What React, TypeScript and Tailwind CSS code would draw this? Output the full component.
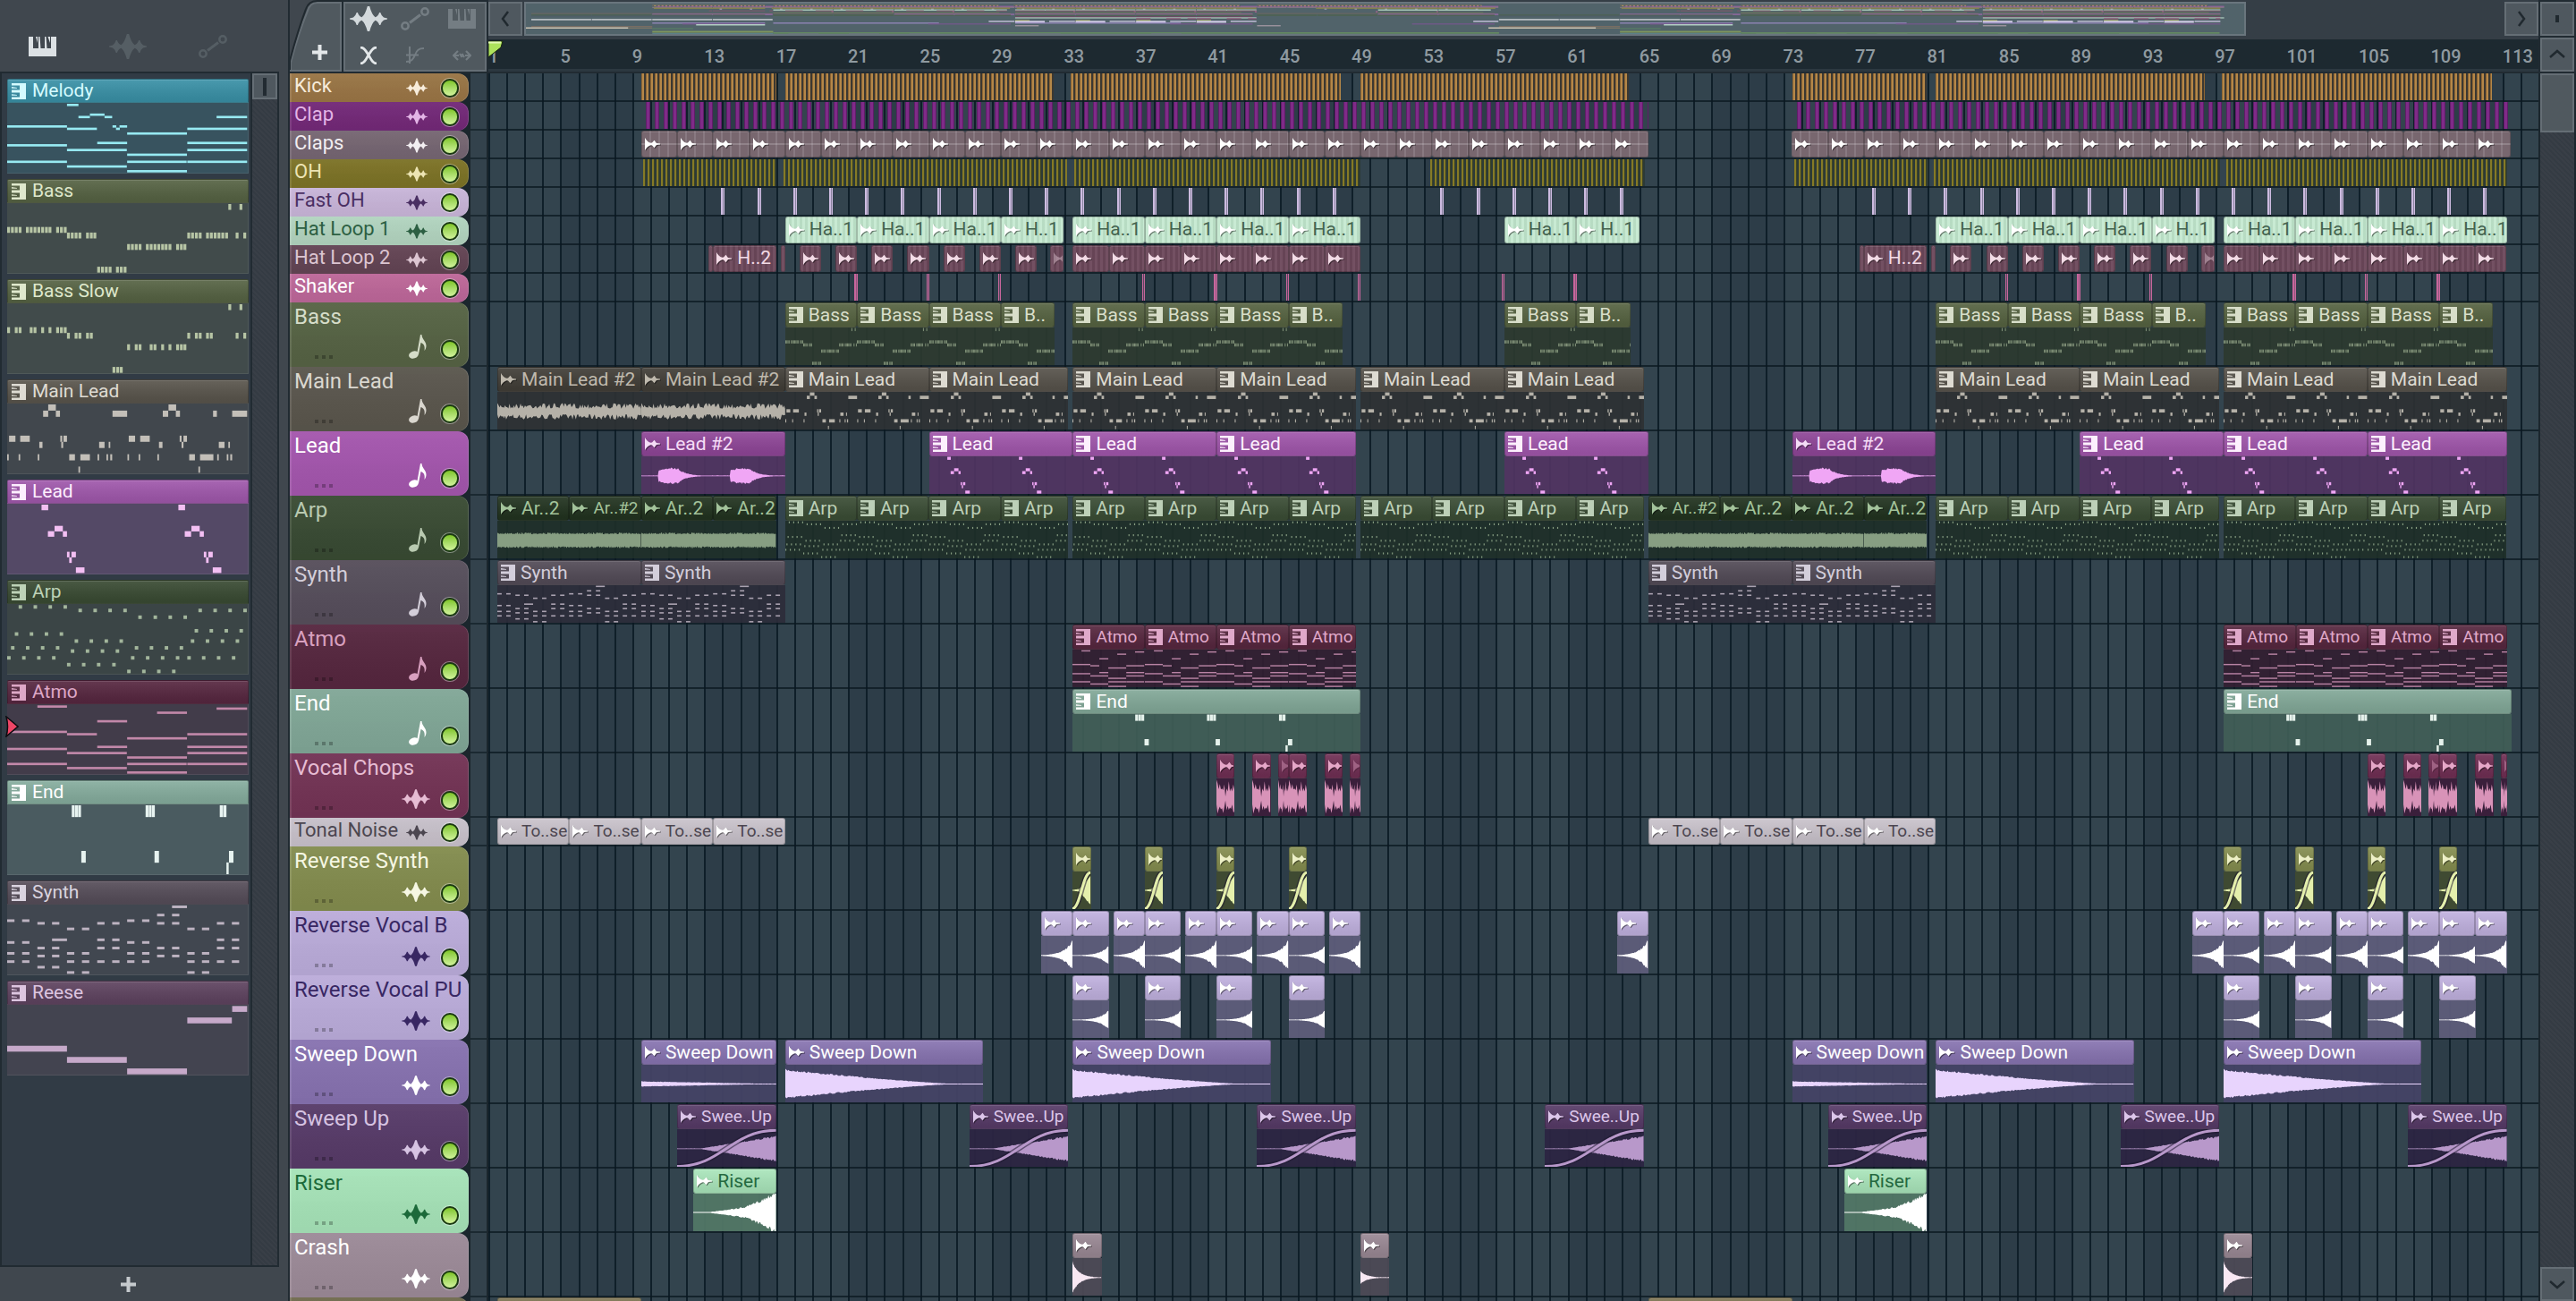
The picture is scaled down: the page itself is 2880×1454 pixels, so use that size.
import React from "react";

/* ---------- note patterns, drawn on a 756 x 237 canvas ---------- */

type Note = [number, number, number, number];
const row = (y: number, w: number, h: number, xs: number[]): Note[] => xs.map((x) => [x, y, w, h]);
const bars = (h: number, list: [number, number, number][]): Note[] => list.map(([x, y, w]) => [x, y, w, h]);

const PATTERNS: Record<string, Note[]> = {
  melody: bars(8, [
    [0, 76, 188], [0, 140, 188], [0, 196, 188], [188, 3, 36], [224, 44, 36], [260, 36, 46], [306, 44, 24],
    [188, 84, 94], [331, 76, 12], [342, 84, 12], [353, 76, 24], [283, 132, 94], [188, 156, 188], [188, 212, 188],
    [377, 100, 188], [377, 172, 188], [377, 196, 187], [377, 228, 188], [658, 44, 96], [566, 84, 188],
    [566, 132, 188], [566, 156, 188], [566, 196, 188],
  ]),
  bass: [
    ...row(81, 9, 20, [0, 12, 24, 36, 59, 71, 83, 95, 107, 119, 130, 154, 166, 178]),
    ...row(100, 9, 20, [188, 200, 212, 224, 248, 260, 271, 566, 578, 590, 602, 625, 637, 649, 661, 673, 685, 718, 742]),
    ...row(139, 9, 20, [377, 389, 401, 413, 436, 448, 460, 472, 484, 495, 507, 531, 543, 554]),
    ...row(216, 9, 20, [283, 295, 307, 319, 342, 354, 366]),
    ...row(3, 9, 20, [695, 730]),
  ],
  bassSlow: [
    ...row(81, 9, 20, [0, 24, 36, 71, 83, 107, 130, 154, 166, 178]),
    ...row(100, 9, 20, [188, 212, 224, 248, 260, 566, 590, 602, 625, 637, 718, 742]),
    ...row(139, 9, 20, [377, 401, 413, 448, 460, 484, 507, 531, 543, 554]),
    ...row(216, 9, 20, [331, 343, 354]),
    ...row(3, 9, 20, [695, 730]),
  ],
  mainLead: bars(21, [
    [129, 3, 24], [507, 3, 24], [113, 24, 16], [153, 24, 13], [331, 24, 46], [489, 24, 17], [530, 24, 13],
    [647, 24, 12], [707, 24, 47], [6, 109, 20], [41, 109, 30], [167, 109, 6], [177, 109, 11], [382, 109, 20],
    [418, 109, 30], [542, 109, 6], [554, 109, 11], [101, 130, 10], [170, 130, 6], [289, 130, 17], [319, 130, 5],
    [477, 130, 11], [548, 130, 6], [665, 130, 18], [695, 130, 5], [0, 172, 5], [36, 172, 5], [96, 172, 5],
    [195, 172, 18], [230, 172, 30], [284, 172, 5], [312, 172, 5], [324, 172, 6], [378, 172, 5], [413, 172, 5],
    [472, 172, 5], [572, 172, 18], [606, 172, 42], [660, 172, 5], [690, 172, 5], [701, 172, 6], [224, 214, 5], [601, 214, 5],
  ]),
  lead: [0, 430].flatMap((o) =>
    bars(19, [
      [108 + o, 3, 21], [128 + o, 93, 20], [149 + o, 75, 26], [175 + o, 93, 13], [188 + o, 163, 8],
      [202 + o, 163, 14], [195 + o, 182, 8], [216 + o, 216, 27],
    ]),
  ),
  arp: [
    ...row(4, 11, 12, [36, 83, 130, 177]),
    ...row(16, 11, 12, [224, 271, 318, 365, 601, 648, 695, 742]),
    ...row(39, 11, 12, [412, 460, 507, 554]),
    ...row(85, 11, 12, [589, 636, 683, 730]),
    ...row(96, 11, 12, [24, 71, 118, 165]),
    ...row(120, 11, 12, [212, 259, 306, 353, 577, 624, 671, 718]),
    ...row(143, 11, 12, [12, 59, 106, 153, 401, 448, 495, 542]),
    ...row(154, 11, 12, [200, 247, 294, 341]),
    ...row(177, 11, 12, [0, 47, 94, 141, 389, 436, 483, 530, 566, 612, 659, 706]),
    ...row(200, 11, 12, [188, 235, 282, 330]),
    ...row(223, 11, 12, [377, 424, 471, 518]),
  ],
  atmo: bars(8, [
    [95, 4, 93], [0, 90, 188], [0, 148, 188], [0, 199, 188], [188, 98, 94], [283, 54, 94], [283, 141, 94],
    [188, 162, 188], [188, 213, 188], [377, 112, 188], [377, 177, 188], [377, 199, 187], [377, 228, 188],
    [471, 25, 94], [658, 11, 96], [566, 98, 188], [566, 141, 188], [566, 162, 188], [566, 199, 188],
  ]),
  end: [
    ...[203, 435].flatMap((x) => row(3, 9, 40, [x, x + 10, x + 20])),
    ...row(3, 10, 40, [668, 679]),
    ...row(158, 14, 40, [233, 463, 697]),
    [689, 197, 7, 40],
  ],
  synth: [
    [518, 3, 47, 9],
    [141, 115, 47, 9],
    ...row(31, 23, 9, [471, 518]),
    ...row(50, 23, 9, [0, 47, 377, 424]),
    ...row(59, 23, 9, [95, 141, 283, 330, 471, 518, 659, 706]),
    ...row(78, 23, 9, [188, 235, 566, 612]),
    ...row(115, 23, 9, [283, 330, 659, 706]),
    ...row(124, 23, 9, [0, 47, 377, 424]),
    ...row(143, 23, 9, [95, 141, 283, 330, 471, 518, 659, 706]),
    ...row(161, 23, 9, [0, 47, 188, 235, 377, 424, 566, 612]),
    ...row(170, 23, 9, [95, 141, 471, 518]),
    ...row(189, 23, 9, [0, 47, 188, 235, 283, 330, 377, 424, 566, 612, 659, 706]),
    ...row(208, 23, 9, [95, 141]),
    ...row(226, 23, 9, [188, 235, 566, 612]),
  ],
  reese: bars(20, [[0, 139, 188], [188, 177, 188], [377, 216, 188], [566, 43, 140], [707, 4, 47]]),
};

const PATTERN_BARS: Record<string, number> = { bass: 4, mainLead: 8, lead: 7, arp: 4, atmo: 4, end: 13, synth: 8 };

function Notes({ name, part = 1 }: { name: string; part?: number }) {
  return (
    <svg className="block h-full w-full" viewBox={`0 0 ${756 * part} 237`} preserveAspectRatio="none" fill="currentColor" aria-hidden="true">
      {PATTERNS[name].map(([x, y, w, h], i) => (
        <rect key={i} x={x} y={y} width={w} height={h} />
      ))}
    </svg>
  );
}

/* ---------- audio wave shapes, drawn on a 200 x 100 canvas ---------- */

function wave(env: (t: number) => number, jitter: number, steps = 160, center = 52): string {
  let seed = 7;
  const rand = () => {
    seed = (seed * 16807) % 2147483647;
    return seed / 2147483647;
  };
  const top: string[] = [];
  const bottom: string[] = [];
  for (let i = 0; i <= steps; i++) {
    const t = i / steps;
    const x = (t * 200).toFixed(1);
    const a = Math.max(env(t) * 50, 1.2);
    top.push(`${x},${(center - a * (1 - jitter * rand())).toFixed(1)}`);
    bottom.unshift(`${x},${(center + a * (1 - jitter * rand())).toFixed(1)}`);
  }
  return [...top, ...bottom].join(" ");
}

const blob = (t: number) => {
  const u = (t % 0.5) - 0.12;
  if (u < 0) return 0;
  if (u < 0.04) return 0.32 + u * 2;
  if (u < 0.13) return 0.44;
  return 0.44 * Math.exp(-(u - 0.13) * 17);
};

const WAVES: Record<string, string> = {
  mainLead2: wave(() => 0.44, 0.68, 130),
  lead2: wave(blob, 0.22, 200),
  arp2: wave(() => 0.42, 0.25, 150),
  chop: wave((t) => (t > 0.44 && t < 0.52 ? 0.15 : 0.97), 0.7, 16),
  reverseA: wave((t) => 0.85 * Math.exp((t - 1) * 3.6), 0.2, 60),
  reverseB: wave((t) => 0.52 * Math.exp((t - 1) * 4.2), 0.15, 60),
  sweepDown: wave((t) => 0.8 * Math.pow(Math.max(0, 1 - t * 1.15), 1.25), 0.15, 180, 51),
  sweepThin: wave((t) => 0.15 * (1 - t), 0.2, 120, 51),
  sweepUp: wave((t) => Math.max(0, (t - 0.22) / 0.78) * 0.7, 0.15, 120),
  reverseSynth: wave((t) => (t < 0.4 ? 0.02 + t * 0.15 : 0.1 + (t - 0.4) * 1.15), 0.1, 30, 50),
  riser: wave((t) => (t < 0.15 ? 0 : 0.36 * ((t - 0.15) / 0.5) ** 1.1 * (t > 0.65 ? 1 + (t - 0.65) * 2.6 : 0.9)), 0.25, 90, 50),
  crash: wave((t) => 0.88 * Math.exp(-t * 4.2), 0.15, 60),
  crashSoft: wave((t) => 0.36 * Math.exp(-t * 4.2), 0.15, 60),
};

function Wave({ name, curve }: { name: string; curve?: boolean }) {
  return (
    <svg className="block h-full w-full" viewBox="0 0 200 100" preserveAspectRatio="none" aria-hidden="true">
      <polygon points={WAVES[name]} fill="currentColor" />
      {curve && (
        <g fill="none">
          <path d="M0 99C90 99 110 3 200 3" stroke="#1e1830" strokeOpacity="0.55" strokeWidth="6" vectorEffect="non-scaling-stroke" />
          <path d="M0 99C90 99 110 3 200 3" stroke="currentColor" strokeWidth="3" vectorEffect="non-scaling-stroke" />
        </g>
      )}
    </svg>
  );
}

/* ---------- icons ---------- */

function PatternIcon() {
  return (
    <svg className="h-[18px] w-4 shrink-0" viewBox="0 0 16 18" fill="currentColor" aria-hidden="true">
      <path d="M0 0H16V18H0V15.500H9V10.500H0V7.500H9V2.500H0Z" />
      <path d="M0 4L6 5V5.800H0ZM0 12.200L6 13V13.800H0Z" />
    </svg>
  );
}

function AudioIcon() {
  return (
    <svg className="h-[14px] w-[17px] shrink-0 drop-shadow-[1px_1px_0_rgba(0,0,0,0.45)]" viewBox="0 0 17 14" fill="currentColor" aria-hidden="true">
      <path d="M0 0C1.500 2.500 3.500 5 6.500 5.800L8 5.500L10.500 2.800L13 6L17 6.600V7.400L13 8L10.500 11.200L8 8.500L6.500 8.200C3.500 9 1.500 11.500 0 14Z" />
    </svg>
  );
}

function WaveGlyph({ className }: { className: string }) {
  return (
    <svg className={className} viewBox="0 0 42 28" fill="currentColor" aria-hidden="true">
      <path d="M0 13.600L4 12.600Q6.500 11 7.700 7H8.900Q10 11 13.500 12.300Q17.500 9 19.800 0H22.200Q24.500 9 28.500 12.300Q32 11 33.100 7H34.300Q35.500 11 38 12.600L42 13.600V14.400L38 15.400Q35.500 17 34.300 21H33.100Q32 17 28.500 15.700Q24.500 19 22.200 28H19.800Q17.500 19 13.500 15.700Q10 17 8.900 21H7.700Q6.500 17 4 15.400L0 14.400Z" />
    </svg>
  );
}

function AutomationGlyph() {
  return (
    <svg className="h-[26px] w-[32px]" viewBox="0 0 32 26" fill="none" stroke="currentColor" strokeWidth="2.500" aria-hidden="true">
      <circle cx="5" cy="21" r="3.700" />
      <circle cx="27" cy="5" r="3.700" />
      <path d="M10 17.500L22 8.500" strokeWidth="3" />
    </svg>
  );
}

function PianoGlyph() {
  return (
    <svg className="h-[22px] w-[31px]" viewBox="0 0 31 22" fill="currentColor" aria-hidden="true">
      <path d="M0 0H5V13H11V0H12.500L13.500 13H18V0H19.500L20.500 13H25V0H31V22H0Z" />
      <path d="M8 0H10V7ZM21.500 0H24V7Z" />
    </svg>
  );
}

function NoteGlyph() {
  return (
    <svg className="h-[27px] w-5" viewBox="0 0 20 27" fill="currentColor" aria-hidden="true">
      <ellipse cx="5.500" cy="22.500" rx="5.500" ry="4" transform="rotate(-18 5.500 22.500)" />
      <path d="M9 22L13 0H14.500C14.500 5 20 8 19.500 13C19.300 15 18.500 17 17.500 18C18.300 13 17 10 13.500 9L11 22Z" />
    </svg>
  );
}

function Chevron({ d }: { d: string }) {
  return (
    <svg className="size-5" viewBox="0 0 20 20" fill="none" stroke="#20292f" strokeWidth="2.500" aria-hidden="true">
      <path d={d} />
    </svg>
  );
}

function Plus() {
  return (
    <svg className="size-[17px]" viewBox="0 0 17 17" fill="currentColor" aria-hidden="true">
      <path d="M6.500 0H10.500V6.500H17V10.500H10.500V17H6.500V10.500H0V6.500H6.500Z" />
    </svg>
  );
}

/* ---------- arrangement data; positions are in bars ---------- */

type Clip = { s: number; e: number; label?: string; notes?: string; wave?: string; curve?: boolean; faded?: boolean; bare?: boolean; head?: string };
type Track = {
  name: string;
  tone: string;
  ink: string;
  small?: boolean;
  note?: boolean;
  mini: string;
  head?: string;
  face?: string;
  iconInk?: string;
  body?: string;
  art?: string;
  stripes?: string;
  clips: Clip[];
};

const chain = (edges: number[], extra: (i: number) => Partial<Clip>): Clip[] =>
  edges.slice(0, -1).map((s, i) => ({ s, e: edges[i + 1], ...extra(i) }));
const every = (from: number, to: number, step: number, length: number, extra: Partial<Clip> = {}): Clip[] => {
  const out: Clip[] = [];
  for (let s = from; s < to; s += step) out.push({ s, e: s + length, ...extra });
  return out;
};
const spans = (list: [number, number][], extra: Partial<Clip> = {}): Clip[] => list.map(([s, e]) => ({ s, e, ...extra }));

const BASS = (i: number) => ({ label: i === 3 ? "B.." : "Bass", notes: "bass" });
const ARP = () => ({ label: "Arp", notes: "arp" });
const MAIN = () => ({ label: "Main Lead", notes: "mainLead" });
const ATMO = () => ({ label: "Atmo", notes: "atmo" });
const HAT = (i: number) => ({ label: i === 3 ? "H..1" : "Ha..1" });
const TONAL = () => ({ label: "To..se" });
const ARP_AUDIO = "bg-[#22331f] text-[#a3c39b]";
const MAIN_AUDIO = "bg-[#413e37] text-[#bfb9ad]";
const SMALL_TEXT_LABELS = ["To..se", "Ar..#2", "Swee..Up", "Atmo"];

const chops = (o: number, last: number): Clip[] => [
  ...spans([[41 + o, 42 + o], [43 + o, 44 + o]], { wave: "chop" }),
  { s: 44.4 + o, e: 45 + o, wave: "chop", faded: true },
  ...spans([[45 + o, 46 + o], [47 + o, 48 + o]], { wave: "chop" }),
  { s: 48.4 + o, e: last, wave: "chop", faded: true },
];
const vocalB = (o: number): Clip[] =>
  [0, 4, 8, 12].flatMap((k) => [
    { s: 31.25 + o + k, e: 33 + o + k, wave: "reverseA" },
    { s: 33 + o + k, e: 35 + o + k, wave: "reverseB" },
  ]);
const hatTwo = (o: number): Clip[] => [
  { s: 12.75 + o, e: 13 + o, bare: true },
  { s: 13 + o, e: 16.5 + o, label: "H..2" },
  { s: 16.75 + o, e: 17 + o, bare: true },
  ...every(17.8 + o, 31 + o, 2, 1.2),
  { s: 31.75 + o, e: 32.5 + o, faded: true },
];

const TRACKS: Track[] = [
  {
    name: "Kick", tone: "bg-[#997545]", ink: "text-[#f7ecdb]", small: true, mini: "fill-[#c59a59]",
    stripes: "bg-[repeating-linear-gradient(90deg,#8c6534_0_1px,#b58748_1px_3px,#3b3832_3px_5px)]",
    clips: spans([[9, 16.5], [17, 31.95], [32.9, 47.9], [49, 63.9], [73, 80.5], [81, 95.95], [96.9, 111.9]]),
  },
  {
    name: "Clap", tone: "bg-[#732978]", ink: "text-[#e3b5e6]", small: true, mini: "fill-[#a05aa8]",
    stripes: "bg-[repeating-linear-gradient(90deg,#5f1d68_0_1px,#7f2b88_1px_4px,#5f1d68_4px_5px,transparent_5px_10px)]",
    clips: spans([[9.25, 65], [73.25, 113]]),
  },
  {
    name: "Claps", tone: "bg-[#766672]", ink: "text-[#f2eef1]", small: true, mini: "fill-[#8d7c87]",
    head: "bg-[#78676f] text-white",
    face: "bg-[linear-gradient(transparent_48%,rgba(255,255,255,0.18)_48%_54%,transparent_54%),repeating-linear-gradient(90deg,transparent_0_8px,rgba(255,255,255,0.12)_8px_10px)]",
    clips: [...every(9, 65, 2, 2), ...every(73, 113, 2, 2)],
  },
  {
    name: "OH", tone: "bg-[#7c7226]", ink: "text-[#ece4b3]", small: true, mini: "fill-[#948b46]",
    stripes: "bg-[repeating-linear-gradient(90deg,#857a26_0_2px,#3d4425_2px_3px,#2c3a38_3px_5px)]",
    clips: spans([[9.1, 16.5], [16.9, 32.7], [33.1, 49], [52.9, 64.8], [73.1, 80.6], [80.9, 96.8], [97.15, 112.75]]),
  },
  {
    name: "Fast OH", tone: "bg-[#c8b5d8]", ink: "text-[#4a2f63]", small: true, mini: "fill-[#a79cb5]",
    stripes: "bg-linear-to-r from-[#cdbbe0] from-40% via-transparent via-40% to-[#cdbbe0] to-75%",
    clips: [...every(13.45, 48, 2, 0.2), ...every(53.45, 64, 2, 0.2), ...every(77.45, 112, 2, 0.2)],
  },
  {
    name: "Hat Loop 1", tone: "bg-[#b2d4bf]", ink: "text-[#2c5f42]", small: true, mini: "fill-[#c8ead3]",
    head: "bg-[#c8ead3] text-[#44634f]", iconInk: "text-white",
    face: "bg-[repeating-linear-gradient(90deg,transparent_0_3px,rgba(60,110,80,0.12)_3px_6px)]",
    clips: [
      ...chain([17, 21, 25, 29, 32.5], HAT),
      ...chain([33, 37, 41, 45, 49], () => HAT(0)),
      ...chain([57, 61, 64.5], (i) => HAT(i ? 3 : 0)),
      ...chain([81, 85, 89, 93, 96.5], HAT),
      ...chain([97, 101, 105, 109, 112.75], () => HAT(0)),
    ],
  },
  {
    name: "Hat Loop 2", tone: "bg-[#634454]", ink: "text-[#dcc5d1]", small: true, mini: "fill-[#7d586a]",
    head: "bg-[#735062] text-[#f3dbe6]",
    face: "bg-[repeating-linear-gradient(90deg,transparent_0_3px,rgba(30,5,20,0.16)_3px_6px)]",
    clips: [...hatTwo(0), ...every(33, 49, 2, 2), ...hatTwo(64), ...every(97, 111, 2, 2), { s: 111, e: 112.75 }],
  },
  {
    name: "Shaker", tone: "bg-[#bd6799]", ink: "text-white", small: true, mini: "fill-[#bd6799]",
    stripes: "bg-linear-to-r from-[#c7669c] from-40% via-transparent via-40% to-[#c7669c] to-75%",
    clips: [21, 25, 29, 37, 41, 45, 49, 57, 61, 85, 89, 93, 101, 105, 109].map((b) => ({ s: b - 0.15, e: b + 0.02 })),
  },
  {
    name: "Bass", tone: "bg-[#566344]", ink: "text-[#d6ddc9]", note: true, mini: "fill-[#6d7b5c]",
    head: "bg-[#566341] text-[#d8dec9]", body: "bg-[#2c3a2f]/90", art: "text-[#84957b]",
    clips: [
      ...chain([17, 21, 25, 29, 32], BASS), ...chain([33, 37, 41, 45, 48], BASS),
      ...chain([57, 61, 64], (i) => BASS(i ? 3 : 0)),
      ...chain([81, 85, 89, 93, 96], BASS), ...chain([97, 101, 105, 109, 112], BASS),
    ],
  },
  {
    name: "Main Lead", tone: "bg-[#5a564d]", ink: "text-[#dad7cf]", note: true, mini: "fill-[#6b675f]",
    head: "bg-[#57534b] text-[#dedbd2]", body: "bg-[#2d3133]/90", art: "text-[#b5b1a8]",
    clips: [
      ...chain([1, 9, 17], () => ({ label: "Main Lead #2", wave: "mainLead2", head: MAIN_AUDIO })),
      ...chain([17, 25, 32.75], MAIN), ...chain([33, 41, 48.75], MAIN), ...chain([49, 57, 64.75], MAIN),
      ...chain([81, 89, 96.75], MAIN), ...chain([97, 105, 112.75], MAIN),
    ],
  },
  {
    name: "Lead", tone: "bg-[#a456ad]", ink: "text-white", note: true, mini: "fill-[#a86bb3]",
    head: "bg-[#a056aa] text-[#fdf0fd]", body: "bg-[#523463]/90", art: "text-[#f0a6f5]",
    clips: [
      { s: 9, e: 17, label: "Lead #2", wave: "lead2", head: "bg-[#8e4597] text-[#f5dcf7]" },
      ...chain([25, 33, 41, 48.75], () => ({ label: "Lead", notes: "lead" })),
      { s: 57, e: 65, label: "Lead", notes: "lead" },
      { s: 73, e: 81, label: "Lead #2", wave: "lead2", head: "bg-[#8e4597] text-[#f5dcf7]" },
      ...chain([89, 97, 105, 112.75], () => ({ label: "Lead", notes: "lead" })),
    ],
  },
  {
    name: "Arp", tone: "bg-[#394b33]", ink: "text-[#b9cab1]", note: true, mini: "fill-[#4b6247]",
    head: "bg-[#3b4d35] text-[#bdd0b8]", body: "bg-[#1e2f28]/90", art: "text-[#879e82]",
    clips: [
      ...chain([1, 5, 9, 13, 16.5], (i) => ({ label: i === 1 ? "Ar..#2" : "Ar..2", wave: "arp2", head: ARP_AUDIO })),
      ...chain([17, 21, 25, 29, 32.75], ARP), ...chain([33, 37, 41, 45, 48.75], ARP), ...chain([49, 53, 57, 61, 64.75], ARP),
      ...chain([65, 69, 73, 77, 80.5], (i) => ({ label: i === 0 ? "Ar..#2" : "Ar..2", wave: "arp2", head: ARP_AUDIO })),
      ...chain([81, 85, 89, 93, 96.75], ARP), ...chain([97, 101, 105, 109, 112.75], ARP),
    ],
  },
  {
    name: "Synth", tone: "bg-[#564e5b]", ink: "text-[#d3ced9]", note: true, mini: "fill-[#4f5d68]",
    head: "bg-[#534b57] text-[#d3cedb]", body: "bg-[#2c2c3a]/90", art: "text-[#aaa2b0]",
    clips: [1, 9, 65, 73].map((s) => ({ s, e: s + 8, label: "Synth", notes: "synth" })),
  },
  {
    name: "Atmo", tone: "bg-[#56273f]", ink: "text-[#d8a0bf]", note: true, mini: "fill-[#7c3d61]",
    head: "bg-[#57273f] text-[#e0a9ca]", body: "bg-[#321e31]/90", art: "text-[#b983a4]",
    clips: [...chain([33, 37, 41, 45, 48.75], ATMO), ...chain([97, 101, 105, 109, 112.75], ATMO)],
  },
  {
    name: "End", tone: "bg-[#81a797]", ink: "text-white", note: true, mini: "fill-[#b9d8ca]",
    head: "bg-[#82a898] text-white", body: "bg-[#415f58]/90", art: "text-[#e6f2ec]",
    clips: [33, 97].map((s) => ({ s, e: s + 16, label: "End", notes: "end" })),
  },
  {
    name: "Vocal Chops", tone: "bg-[#733355]", ink: "text-[#e6bcd3]", mini: "fill-[#8f4c73]",
    head: "bg-[#702f54] text-[#e6a7c8]", body: "bg-[#3a1f3b]", art: "text-[#d893b8]",
    clips: [...chops(0, 49), ...chops(64, 112.75)],
  },
  {
    name: "Tonal Noise", tone: "bg-[#c7c0ca]", ink: "text-[#4c4650]", small: true, mini: "fill-[#f3f0f5]",
    head: "bg-[#c9c2cb] text-[#4c4650]", iconInk: "text-white",
    clips: [...chain([1, 5, 9, 13, 17], TONAL), ...chain([65, 69, 73, 77, 81], TONAL)],
  },
  {
    name: "Reverse Synth", tone: "bg-[#838c4e]", ink: "text-[#f6f7e3]", mini: "fill-[#b0b85f]",
    head: "bg-[#848d4f] text-[#edf0c6]", body: "bg-[#3f4a32]", art: "text-[#e4efac]",
    clips: [33, 37, 41, 45, 97, 101, 105, 109].map((s) => ({ s, e: s + 1, wave: "reverseSynth", curve: true })),
  },
  {
    name: "Reverse Vocal B", tone: "bg-[#bbacda]", ink: "text-[#382763]", mini: "fill-[#e6dcfa]",
    head: "bg-[#c0b1de] text-white", body: "bg-[#5e5d7a]/95", art: "text-white",
    clips: [
      ...vocalB(0), { s: 47.25, e: 49, wave: "reverseA" }, { s: 63.3, e: 65, wave: "reverseA" },
      ...vocalB(64), { s: 111, e: 112.75, wave: "reverseA" },
    ],
  },
  {
    name: "Reverse Vocal PU", tone: "bg-[#bbacda]", ink: "text-[#382763]", mini: "fill-[#e6dcfa]",
    head: "bg-[#c0b1de] text-white", body: "bg-[#5e5d7a]/95", art: "text-white",
    clips: [33, 37, 41, 45, 97, 101, 105, 109].map((s) => ({ s, e: s + 2, wave: "reverseB" })),
  },
  {
    name: "Sweep Down", tone: "bg-[#8772b0]", ink: "text-white", mini: "fill-[#a08fcb]",
    head: "bg-[#8874b1] text-white", body: "bg-[#454365]/95", art: "text-[#e8d4fd]",
    clips: [
      { s: 9, e: 16.5, label: "Sweep Down", wave: "sweepThin" },
      ...spans([[17, 28], [33, 44]], { label: "Sweep Down", wave: "sweepDown" }),
      { s: 73, e: 80.5, label: "Sweep Down", wave: "sweepThin" },
      ...spans([[81, 92], [97, 108]], { label: "Sweep Down", wave: "sweepDown" }),
    ],
  },
  {
    name: "Sweep Up", tone: "bg-[#573b68]", ink: "text-[#d6c3e2]", mini: "fill-[#7a5792]",
    head: "bg-[#573b67] text-[#dcc6ea]", body: "bg-[#2c2542]/95", art: "text-[#b898ca]",
    clips: spans(
      [[11, 16.5], [27.25, 32.75], [43.25, 48.75], [59.25, 64.75], [75, 80.5], [91.25, 96.75], [107.25, 112.75]],
      { label: "Swee..Up", wave: "sweepUp", curve: true },
    ),
  },
  {
    name: "Riser", tone: "bg-[#a6e3b8]", ink: "text-[#1c6a3a]", mini: "fill-[#d1f7e0]",
    head: "bg-[#a9e5bb] text-[#25693f]", iconInk: "text-white", body: "bg-[#527766]/95", art: "text-white",
    clips: spans([[11.9, 16.5], [75.9, 80.5]], { label: "Riser", wave: "riser" }),
  },
  {
    name: "Crash", tone: "bg-[#9c8a98]", ink: "text-white", mini: "fill-[#b0a0ac]",
    head: "bg-[#998894] text-white", body: "bg-[#4d4a55]/95", art: "text-[#f8e8f3]",
    clips: [
      { s: 33, e: 34.6, wave: "crash" }, { s: 49, e: 50.6, wave: "crashSoft" }, { s: 97, e: 98.6, wave: "crash" },
    ],
  },
  {
    name: "", tone: "bg-[#6f6a4d]", ink: "text-[#e0d8b0]", mini: "fill-[#7a765f]",
    head: "bg-[#7d7350] text-[#7d7350]", body: "bg-[#3d3a30]",
    clips: spans([[1, 9], [65, 73]], { bare: true }),
  },
];

const LIBRARY = [
  { name: "Melody", notes: "melody", head: "bg-[#3a90a6] text-[#d4fbff]", body: "bg-[#38535f] text-[#97eaf2]" },
  { name: "Bass", notes: "bass", head: "bg-[#566343] text-[#dfe8cc]", body: "bg-[#414b4b] text-[#b7c5a5]" },
  { name: "Bass Slow", notes: "bassSlow", head: "bg-[#566343] text-[#dfe8cc]", body: "bg-[#414b4b] text-[#b7c5a5]" },
  { name: "Main Lead", notes: "mainLead", head: "bg-[#59554c] text-[#dedbd3]", body: "bg-[#41474d] text-[#c3bfb8]" },
  { name: "Lead", notes: "lead", head: "bg-[#a058ab] text-[#fdeefe]", body: "bg-[#544966] text-[#f3bff3]" },
  { name: "Arp", notes: "arp", head: "bg-[#394b33] text-[#bdd2b7]", body: "bg-[#3b4546] text-[#a3b69c]" },
  { name: "Atmo", notes: "atmo", head: "bg-[#572740] text-[#dda7c6]", body: "bg-[#423c4a] text-[#c288a9]", marker: true },
  { name: "End", notes: "end", head: "bg-[#86ac9d] text-white", body: "bg-[#4a5b60] text-[#e7f3f0]" },
  { name: "Synth", notes: "synth", head: "bg-[#564d59] text-[#d9d3df]", body: "bg-[#414750] text-[#bdb3c1]" },
  { name: "Reese", notes: "reese", head: "bg-[#5e435f] text-[#ddc5e0]", body: "bg-[#434450] text-[#c6a9c9]" },
];

const TOTAL_BARS = 114;
const pct = (n: number) => `${(n / TOTAL_BARS) * 100}%`;

/* ---------- pieces ---------- */

const EDGE = "border border-black/20 shadow-[inset_0_1px_0_rgba(255,255,255,0.12)]";
const SHEEN = "bg-linear-to-b from-white/8 to-black/8";

function ClipView({ clip, track, gap }: { clip: Clip; track: Track; gap: number }) {
  const place = { marginLeft: pct(gap), width: pct(clip.e - clip.s) };
  if (track.stripes) return <div className={`h-full shrink-0 ${track.stripes}`} style={place} />;

  const size = clip.label && SMALL_TEXT_LABELS.includes(clip.label) ? "text-[19px]" : "text-[21px]";
  const title = (
    <>
      {!clip.bare && (
        <span className={`${clip.faded ? "opacity-40" : ""} ${track.iconInk ?? ""}`}>
          {clip.notes ? <PatternIcon /> : <AudioIcon />}
        </span>
      )}
      {clip.label}
    </>
  );
  const bar = `flex items-center gap-[6px] overflow-hidden rounded-[3px] pl-[3px] whitespace-nowrap ${size} ${EDGE} ${track.face ?? SHEEN} ${clip.head ?? track.head}`;

  if (track.small) {
    return (
      <div className={`h-full shrink-0 ${bar}`} style={place}>
        {title}
      </div>
    );
  }
  return (
    <div className="flex h-full shrink-0 flex-col overflow-hidden" style={place}>
      <div className={`h-7 shrink-0 leading-7 ${bar}`}>{title}</div>
      <div className={`min-h-0 flex-1 ${track.body} ${track.art ?? ""}`}>
        {clip.notes && <Notes name={clip.notes} part={(clip.e - clip.s) / PATTERN_BARS[clip.notes]} />}
        {clip.wave && <Wave name={clip.wave} curve={clip.curve} />}
      </div>
    </div>
  );
}

function Lane({ track }: { track: Track }) {
  let end = 0.5;
  return (
    <div className={`flex shrink-0 border-b-2 border-[#0b1820]/75 ${track.small ? "h-8" : "h-[72px]"}`}>
      {track.clips.map((clip, i) => {
        const gap = clip.s - end;
        end = clip.e;
        return <ClipView key={i} clip={clip} track={track} gap={gap} />;
      })}
    </div>
  );
}

function Led({ name }: { name: string }) {
  return (
    <button
      aria-label={`Mute ${name}`}
      aria-pressed="true"
      className="block h-[21px] w-5 rounded-full border-2 border-[#1b3a12] bg-linear-to-b from-[#7fc522] to-[#d2f39b] ring-1 ring-white/40"
    />
  );
}

function TrackHead({ track }: { track: Track }) {
  const face = `shrink-0 rounded-r-xl border-l-2 border-white/10 bg-linear-to-b from-white/4 to-black/5 shadow-[inset_-1px_0_0_rgba(255,255,255,0.15)] ${track.tone} ${track.ink}`;
  if (track.small) {
    return (
      <div className={`flex h-8 items-center pr-[11px] pl-[3px] text-[22px] leading-none whitespace-nowrap ${face}`}>
        <span className="flex-1 pb-1">{track.name}</span>
        <WaveGlyph className="mr-[15px] h-[17px] w-6" />
        <Led name={track.name} />
      </div>
    );
  }
  return (
    <div className={`flex h-[72px] flex-col justify-between pt-0.5 pr-[11px] pb-[9px] pl-[3px] ${face}`}>
      <span className="text-2xl leading-7 whitespace-nowrap">{track.name}</span>
      {track.name && (
        <div className="flex items-end">
          <span className="ml-[23px] flex flex-1 gap-1 opacity-25">
            <i className="size-1 bg-black" />
            <i className="size-1 bg-black" />
            <i className="size-1 bg-black" />
          </span>
          {track.note ? (
            <span className="mr-[16px]"><NoteGlyph /></span>
          ) : (
            <WaveGlyph className="mr-[12px] h-6 w-8" />
          )}
          <Led name={track.name} />
        </div>
      )}
    </div>
  );
}

function LibraryItem({ item }: { item: (typeof LIBRARY)[number] }) {
  return (
    <li className="relative">
      <div className={`flex h-[27px] items-center gap-[7px] rounded-t-[2px] pl-1 text-[21px] leading-none ${EDGE} ${SHEEN} ${item.head}`}>
        <PatternIcon />
        {item.name}
      </div>
      <div className={`h-[79px] border-r border-b border-white/8 ${item.body}`}>
        <Notes name={item.notes} />
      </div>
      {item.marker && (
        <svg className="absolute top-10 -left-0.5 h-6 w-[15px]" viewBox="0 0 15 24" aria-hidden="true">
          <path d="M1 1L14 12L1 23Q4 12 1 1Z" fill="#ee4666" stroke="#0c0c10" strokeWidth="1.500" />
        </svg>
      )}
    </li>
  );
}

const EXTRA_LINES: [number, number, number, number, string][] = [
  [1, 9, 26.5, 1.5, "fill-[#7b7566]"], [9, 11.7, 27.5, 1, "fill-[#5a8462]"], [0.3, 7.4, 26.5, 1.5, "fill-[#cdc3b2]"],
  [1, 9, 25, 1, "fill-[#776d63]"], [9, 17, 30.5, 2, "fill-[#7d965d]"], [1, 17, 35.3, 1.2, "fill-[#8c6a86]"],
  [17, 65, 32.3, 1.2, "fill-[#6d9a5f]"], [18, 20, 33.5, 1, "fill-[#6f7287]"], [22, 24, 33.5, 1, "fill-[#6f7287]"],
  [26, 28, 33.5, 1, "fill-[#6f7287]"], [34, 36, 33.5, 1, "fill-[#6f7287]"], [42, 44, 33.5, 1, "fill-[#6f7287]"],
  [25, 33, 34.3, 1.2, "fill-[#63a3ac]"], [49, 65, 34.3, 1.2, "fill-[#63a3ac]"], [9, 17, 33, 1, "fill-[#5b8088]"],
];

function Overview() {
  return (
    <svg className="block h-full w-full" viewBox="0 0 1920 34" preserveAspectRatio="none" aria-hidden="true">
      {TRACKS.slice(0, 24).map((track, i) =>
        track.clips.map((clip, j) => (
          <rect
            key={`${i}-${j}`}
            className={track.mini}
            x={6 + (clip.s - 1) * 16.9}
            y={1.7 + i * 0.98}
            width={(clip.e - clip.s) * 16.9 - 0.7}
            height={1.1}
          />
        )),
      )}
      {TRACKS[0].clips.map((clip, j) => (
        <line key={j} x1={6 + (clip.s - 1) * 16.9} x2={6 + (clip.e - 1) * 16.9} y1="2.500" y2="2.500" stroke="#55605f" strokeWidth="1.500" strokeDasharray="2 2.200" />
      ))}
      {[0, 64].flatMap((o) =>
        EXTRA_LINES.filter(([, e]) => e + o < 114 || o === 0).map(([s, e, y, h, fill], j) => (
          <rect key={`${o}-${j}`} className={fill} x={6 + (s + o - 1) * 16.9} y={y} width={(e - s) * 16.9} height={h} />
        )),
      )}
      <rect className="fill-[#6d9a5f]" x="1358" y="32.300" width="535" height="1.200" />
    </svg>
  );
}

const SQUARE = "grid size-[38px] shrink-0 place-items-center border-2 border-[#656e75] bg-[#4f585f]";
const HATCH = "bg-[repeating-linear-gradient(45deg,#343b43_0_2px,#393f47_2px_4px)]";

export default function App() {
  return (
    <div className="flex h-screen overflow-hidden bg-[#40474e] font-['Roboto',sans-serif]">
      <aside className="flex w-[314px] shrink-0 flex-col">
        <div className="grid h-20 w-[286px] grid-cols-3 place-items-center pt-6 text-[#555e64]">
          <button aria-label="Patterns" className="text-[#dce1e4]"><PianoGlyph /></button>
          <button aria-label="Audio clips"><WaveGlyph className="h-7 w-[42px]" /></button>
          <button aria-label="Automation clips"><AutomationGlyph /></button>
        </div>
        <div className="flex min-h-0 w-[312px] flex-1 border-2 border-[#212b32]">
          <ul className="flex flex-1 flex-col gap-[6px] bg-[#313b45] py-[6px] pr-[2px] pl-[6px]">
            {LIBRARY.map((item) => (
              <LibraryItem key={item.name} item={item} />
            ))}
          </ul>
          <div className={`w-[30px] border-l-2 border-[#212b32] ${HATCH}`}>
            <div className="grid h-[29px] place-items-center border-2 border-[#656e75] bg-[#4f585f]">
              <i className="h-5 w-1 bg-[#222b32]" />
            </div>
          </div>
        </div>
        <button aria-label="Add pattern" className="grid h-[38px] w-[286px] place-items-center text-[#c5cacd]">
          <Plus />
        </button>
      </aside>

      <main className="ml-2 flex min-w-0 flex-1 flex-col border-l-2 border-[#212b32] bg-[#1b262d]">
        <div className="flex h-[82px] shrink-0 gap-0.5 bg-[#212b32] pb-0.5">
          <button aria-label="Add track" className="relative grid w-[58px] shrink-0 place-items-center bg-[#40474e] pt-9 pl-2 text-[#e3e7e9]">
            <svg className="absolute inset-0 h-full w-full" viewBox="0 0 58 80" preserveAspectRatio="none" aria-hidden="true">
              <path d="M1 79V70Q10 36 20 12Q23 2 32 3H57V79Z" fill="#50595f" stroke="#656e75" strokeWidth="2" />
              <path d="M0 78V68Q9 34 18 10Q21 1 31 1H58" fill="none" stroke="#20292f" strokeWidth="2" />
            </svg>
            <span className="relative"><Plus /></span>
          </button>
          <div className="mt-0.5 grid w-40 shrink-0 grid-cols-3 grid-rows-[34px_32px] place-items-center gap-y-2 border-2 border-[#656e75] bg-[#50595f] text-[#747d83]">
            <button aria-label="Waveform view" className="text-[#d3d9dc]"><WaveGlyph className="h-7 w-[42px]" /></button>
            <button aria-label="Automation view"><AutomationGlyph /></button>
            <button aria-label="Piano view"><PianoGlyph /></button>
            <button aria-label="Cross fade" className="text-[#e3e7e9]">
              <svg className="h-5 w-5" viewBox="0 0 20 20" fill="none" stroke="currentColor" strokeWidth="2.800" aria-hidden="true">
                <path d="M1 1C6 1 7.500 6 10 9.500C12.500 13 14 19 19 19M19 1C14 1 12.500 6 10 9.500C7.500 13 6 19 1 19" />
              </svg>
            </button>
            <button aria-label="Curve">
              <svg className="h-5 w-5" viewBox="0 0 20 20" fill="none" stroke="currentColor" strokeWidth="2" aria-hidden="true">
                <path d="M0 17C6 17 8 14 10 9.500C12 4 14 2 20 2M4 0V19M0 9.500H14" />
              </svg>
            </button>
            <button aria-label="Stretch">
              <svg className="h-3 w-[21px]" viewBox="0 0 21 12" fill="none" stroke="currentColor" strokeWidth="2.200" aria-hidden="true">
                <path d="M6 1L1 6L6 11M15 1L20 6L15 11M1 6H7M14 6H20M8 4L10.500 8M10.500 4L13 8" />
              </svg>
            </button>
          </div>

          <div className="flex min-w-0 flex-1 flex-col">
            <div className="flex h-[44px] shrink-0 gap-0.5 bg-[#353e46] pt-0.5">
              <button aria-label="Scroll left" className={SQUARE}><Chevron d="M13 2L7 10L13 18" /></button>
              <div className="h-[38px] min-w-0 flex-[1924] border-2 border-[#69757d] bg-[#51636a]"><Overview /></div>
              <div className="flex-[286]" />
              <button aria-label="Scroll right" className={SQUARE}><Chevron d="M7 2L13 10L7 18" /></button>
            </div>
            <div className="relative flex flex-1 items-center border-b-[3px] border-[#2c3840] bg-[#1d2930] pt-1 text-xl font-medium text-[#8f9aa0]">
              {Array.from({ length: 29 }, (_, i) => (
                <span key={i} className={`w-0 leading-none ${i === 28 ? "grow-2" : "grow-4"}`}>{1 + i * 4}</span>
              ))}
              <svg className="absolute top-px left-0 h-5 w-[17px]" viewBox="0 0 17 20" aria-hidden="true">
                <path d="M0 1H16L14 8L0 19Z" fill="#aee35c" stroke="#17230f" strokeWidth="1" />
                <path d="M0 2.500H14" stroke="#e4f9b5" strokeWidth="2" />
              </svg>
            </div>
          </div>

          <div className="flex shrink-0 flex-col gap-0.5 pt-0.5 pr-0.5">
            <button aria-label="Options" className={SQUARE}><i className="h-2 w-1 bg-[#20292f]" /></button>
            <button aria-label="Scroll up" className={SQUARE}><Chevron d="M2 13L10 6L18 13" /></button>
          </div>
        </div>

        <div className="flex min-h-0 flex-1">
          <div className="flex w-[200px] shrink-0 flex-col overflow-hidden">
            {TRACKS.map((track, i) => (
              <TrackHead key={i} track={track} />
            ))}
          </div>
          <div className="ml-0.5 flex w-[18px] shrink-0 flex-col overflow-hidden bg-[#33424c]">
            {TRACKS.map((track, i) => (
              <div key={i} className={`shrink-0 border-b-2 border-[#1b2931] ${track.small ? "h-8" : "h-[72px]"}`} />
            ))}
          </div>
          <div className="relative ml-0.5 min-w-0 flex-1 overflow-hidden">
            <div className="absolute inset-0 flex" aria-hidden="true">
              {Array.from({ length: TOTAL_BARS }, (_, i) => (
                <i key={i} className={`flex-1 border-l-2 border-[#0f1f29] ${Math.floor(i / 4) % 2 ? "bg-[#2d3d48]" : "bg-[#33444e]"}`} />
              ))}
            </div>
            <div className="relative flex flex-col">
              {TRACKS.map((track, i) => (
                <Lane key={i} track={track} />
              ))}
            </div>
          </div>
          <div className={`mr-0.5 ml-0.5 flex w-[38px] shrink-0 flex-col justify-between ${HATCH}`}>
            <div className="h-[66px] border-2 border-[#656e75] bg-[#50595f]" />
            <button aria-label="Scroll down" className={SQUARE}><Chevron d="M2 7L10 14L18 7" /></button>
          </div>
        </div>
      </main>
    </div>
  );
}
